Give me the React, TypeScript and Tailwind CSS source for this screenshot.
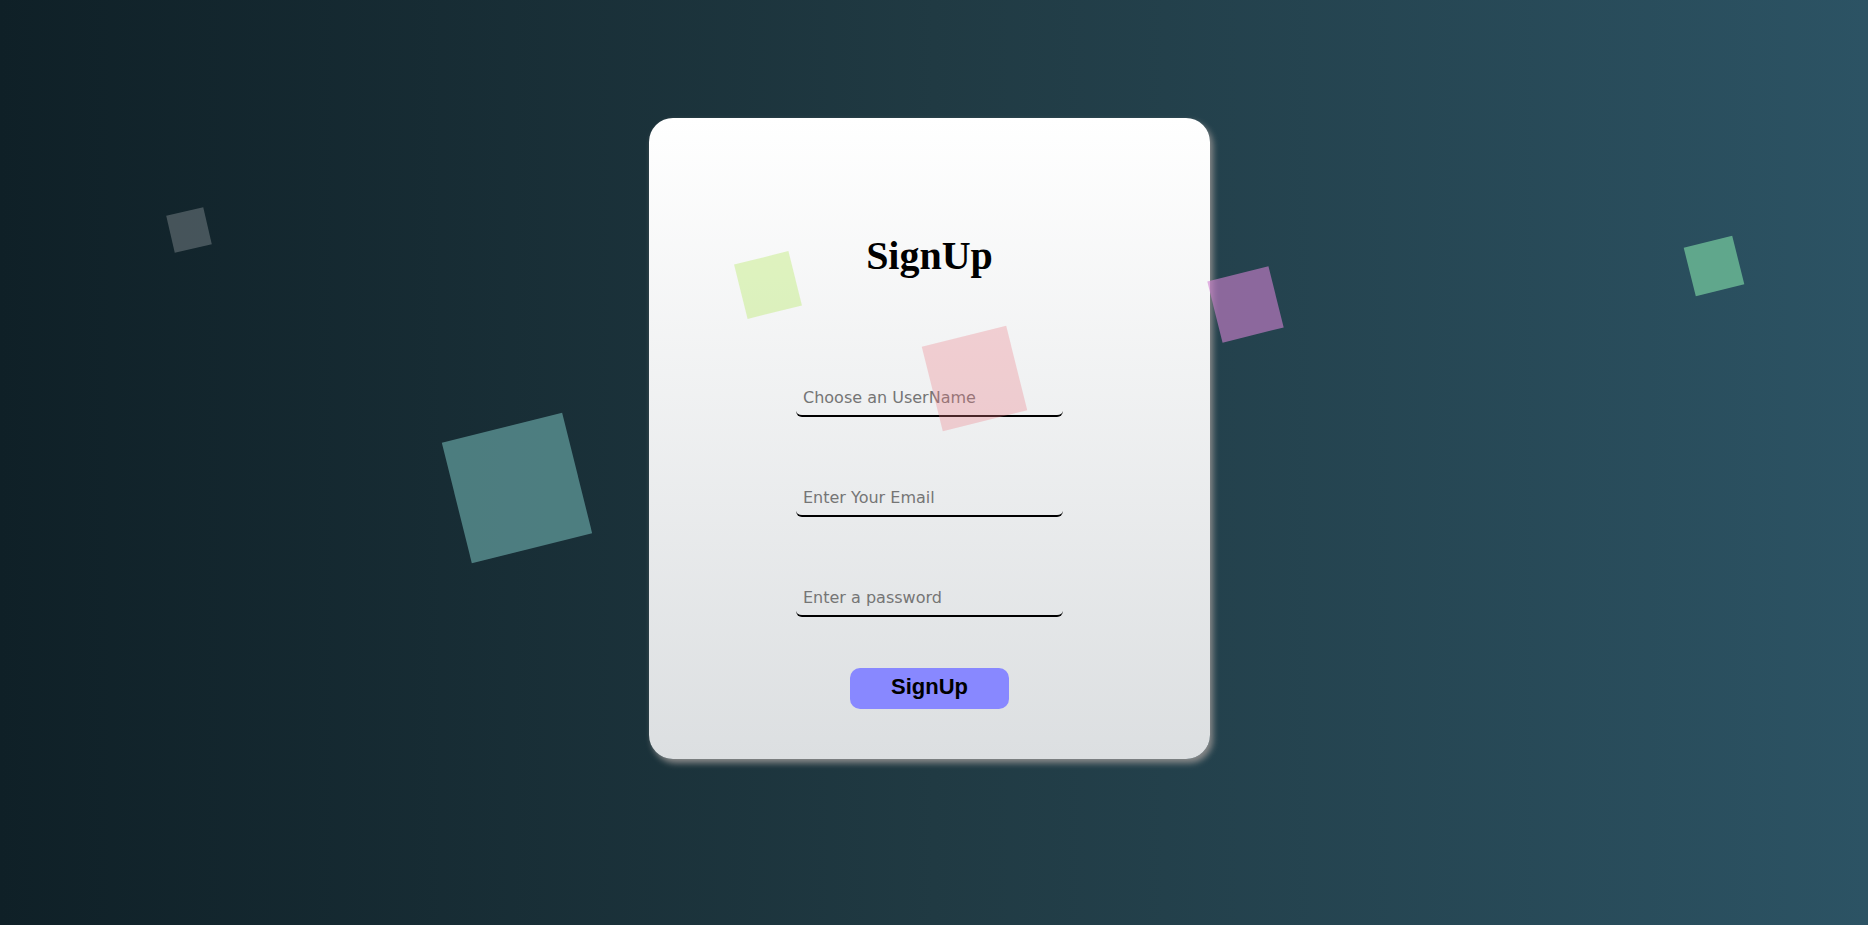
const squares = [
  { cls: "left-[170px] top-[211px] w-[38px] h-[38px] bg-[rgba(255,255,255,0.22)] rotate-[-13deg]" },
  { cls: "left-[455px] top-[426px] w-[124px] h-[124px] bg-[rgba(100,160,160,0.7)] rotate-[-14deg]" },
  { cls: "left-[740px] top-[257px] w-[56px] h-[56px] bg-[rgba(190,235,120,0.45)] rotate-[-14deg]" },
  { cls: "left-[931px] top-[335px] w-[87px] h-[87px] bg-[rgba(235,120,130,0.3)] rotate-[-14deg]" },
  { cls: "left-[1214px] top-[273px] w-[63px] h-[63px] bg-[rgba(210,130,210,0.6)] rotate-[-14deg]" },
  { cls: "left-[1689px] top-[241px] w-[50px] h-[50px] bg-[rgba(120,205,160,0.7)] rotate-[-14deg]" },
];

const Field = ({ placeholder, type }: { placeholder: string; type: string }) => (
  <input
    type={type}
    placeholder={placeholder}
    className="w-[267px] h-[38px] bg-transparent border-0 border-b-2 border-black rounded-[6px] pl-[7px] outline-none text-[16px] font-['DejaVu_Sans',sans-serif] text-black placeholder:text-[#757575]"
  />
);

const App = () => {
  return (
    <div className="relative w-full h-[925px] overflow-hidden bg-linear-to-r from-[#0f2027] via-[#203a43] to-[#2c5364]">
      <div className="flex justify-center pt-[118px] pr-[9px]">
        <div className="w-[561px] h-[641px] rounded-[24px] bg-linear-to-b from-white to-[#dcdfe1] shadow-[3px_4px_6px_#8a8a8a] flex flex-col items-center">
          <h1 className="mt-[118px] h-[40px] leading-[40px] text-[40px] font-bold text-black font-['Liberation_Serif',serif]">
            SignUp
          </h1>
          <form className="mt-[103px] flex flex-col items-center gap-[62px]" onSubmit={(e) => e.preventDefault()}>
            <Field type="text" placeholder="Choose an UserName" />
            <Field type="email" placeholder="Enter Your Email" />
            <Field type="password" placeholder="Enter a password" />
          </form>
          <button className="mt-[51px] w-[159px] h-[41px] pb-[5px] rounded-[10px] bg-[#8888ff] text-black text-[22px] font-bold font-['Liberation_Sans',Arial,sans-serif] flex items-center justify-center">
            SignUp
          </button>
        </div>
      </div>
      {squares.map((s, i) => (
        <div key={i} className={`absolute ${s.cls}`} />
      ))}
    </div>
  );
};

export default App;
